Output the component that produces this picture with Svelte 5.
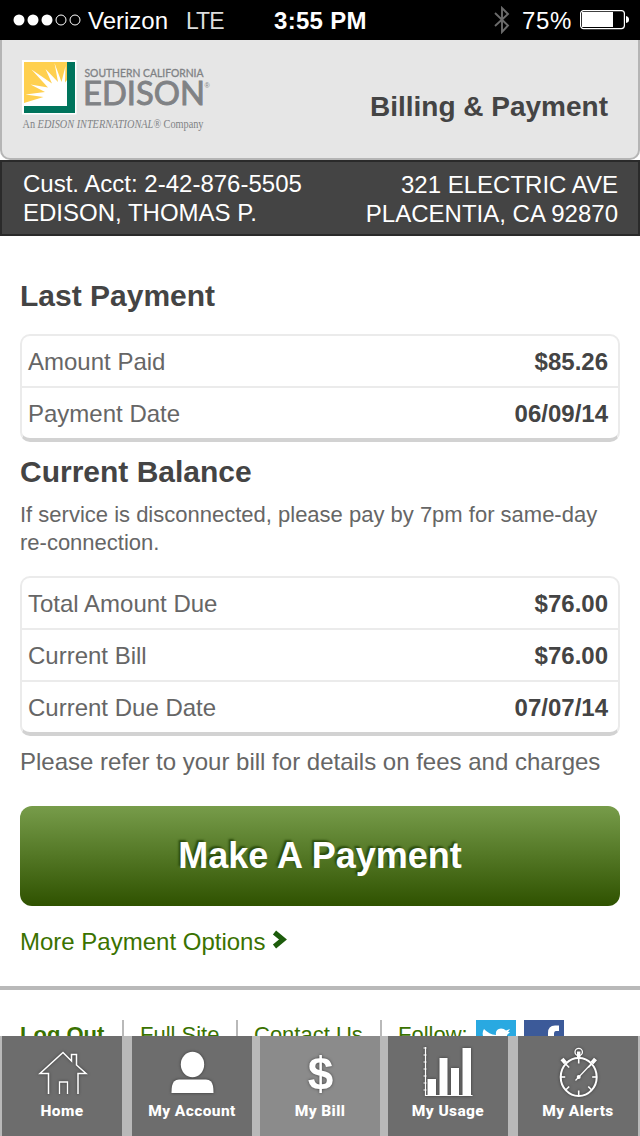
<script>
const account = {
  number: "2-42-876-5505",
  name: "EDISON, THOMAS P.",
  street: "321 ELECTRIC AVE",
  city: "PLACENTIA, CA 92870"
};

const lastPayment = [
  { label: "Amount Paid", value: "$85.26" },
  { label: "Payment Date", value: "06/09/14" }
];

const balance = [
  { label: "Total Amount Due", value: "$76.00" },
  { label: "Current Bill", value: "$76.00" },
  { label: "Current Due Date", value: "07/07/14" }
];

const tabs = [
  { id: "home", label: "Home" },
  { id: "account", label: "My Account" },
  { id: "bill", label: "My Bill" },
  { id: "usage", label: "My Usage" },
  { id: "alerts", label: "My Alerts" }
];

let active = $state("bill");

// minute marks on the stopwatch face
const ticks = [0, 45, 90, 135, 180, 225, 270, 315];
</script>

{#snippet rows(items)}
  <dl class="box">
    {#each items as item}
      <div class="row">
        <dt>{item.label}</dt>
        <dd>{item.value}</dd>
      </div>
    {/each}
  </dl>
{/snippet}

<div class="screen">
  <div class="status">
    <svg class="signal" width="70" height="14" viewBox="0 0 70 14">
      <g fill="#fff">
        <circle cx="7" cy="7" r="5.5" />
        <circle cx="21" cy="7" r="5.5" />
        <circle cx="35" cy="7" r="5.5" />
      </g>
      <g fill="none" stroke="#fff">
        <circle cx="49" cy="7" r="5" />
        <circle cx="63" cy="7" r="5" />
      </g>
    </svg>
    <span class="carrier">Verizon</span>
    <span class="network">LTE</span>
    <span class="time">3:55 PM</span>
    <svg class="bluetooth" width="16" height="28" viewBox="0 0 16 28">
      <path d="M1 7 L14 19.5 L8 26 V2 L14 8 L1 20" fill="none" stroke="#6b6b6b" stroke-width="1.9" />
    </svg>
    <span class="percent">75%</span>
    <svg class="battery" width="50" height="20" viewBox="0 0 50 20">
      <rect x="0.6" y="0.6" width="43.8" height="18" rx="3" fill="none" stroke="#fff" stroke-width="1.2" />
      <rect x="2" y="2" width="31" height="15" fill="#fff" />
      <path d="M46 6 Q49 6.5 49 9.6 Q49 12.7 46 13 Z" fill="#fff" />
    </svg>
  </div>

  <div class="header-wrap">
    <header>
      <svg class="logo" width="196" height="76" viewBox="0 0 196 76">
        <rect width="54.5" height="54.5" fill="#fff" />
        <rect x="2" y="2" width="51" height="51" fill="#00745c" />
        <path d="M2 2 H45 V46 H2 Z" fill="#ffd04f" />
        <path d="M45 46 V20 L43 22.5 L43.5 6 L39.5 22 L32.5 3 L36 22 L23.5 9 L30 23.5 L9.5 9.5 L26 27.5 L8.5 24.5 L23 32 L3.5 34.5 L21.5 37 L2 43 V46 Z" fill="#fff" />
        <path d="M2 44.5 H45 V46 H2 Z" fill="#fff" />
        <text class="region" x="62.5" y="16.5" textLength="119" lengthAdjust="spacingAndGlyphs">SOUTHERN CALIFORNIA</text>
        <text class="brand" x="61" y="45" textLength="122" lengthAdjust="spacingAndGlyphs">EDISON</text>
        <text class="reg" x="182.5" y="28">®</text>
        <text class="tagline" x="0.5" y="67.5" textLength="181" lengthAdjust="spacingAndGlyphs">An <tspan font-style="italic">EDISON INTERNATIONAL®</tspan> Company</text>
      </svg>
      <h1>Billing &amp; Payment</h1>
    </header>
  </div>

  <section class="customer">
    <p>Cust. Acct: {account.number}<br />{account.name}</p>
    <p class="address">{account.street}<br />{account.city}</p>
  </section>

  <main>
    <div class="content">
      <h2>Last Payment</h2>
      {@render rows(lastPayment)}

      <h2 class="second">Current Balance</h2>
      <p class="notice">If service is disconnected, please pay by 7pm for same-day re-connection.</p>
      {@render rows(balance)}

      <p class="refer">Please refer to your bill for details on fees and charges</p>
      <button class="pay">Make A Payment</button>
      <a class="more" href="#options">
        More Payment Options
        <svg width="16" height="20" viewBox="0 0 16 20">
          <path d="M2.5 2.5 L11 9.5 L2.5 16.5" fill="none" stroke="#1d5c0c" stroke-width="5" />
        </svg>
      </a>
    </div>

    <footer>
      <a class="logout" href="#logout">Log Out</a>
      <a class="full" href="#full">Full Site</a>
      <a class="contact" href="#contact">Contact Us</a>
      <span class="follow">Follow:</span>
      <svg class="social" width="40" height="40" viewBox="0 0 40 40">
        <rect width="40" height="40" fill="#29a9e1" />
        <path d="M8 9 Q13 14.5 20 15 Q19 9 25 8.5 Q28 8.5 30 10.5 L34 9 L32 12 L34 12 L31 15 Q31 31 16 32 Q11 32 7 29 Q13 29 16 26 Q11 26 10 22 Q7 20 7 16 Q6 12 8 9 Z" fill="#fff" />
      </svg>
      <svg class="social" width="40" height="40" viewBox="0 0 40 40">
        <rect width="40" height="40" fill="#3c5a99" />
        <path d="M24 40 V24 H19 V18 H24 V13 Q24 5.5 31 5.5 H35 V11 H32 Q30 11 30 14 V18 H35 L34 24 H30 V40 Z" fill="#fff" />
      </svg>
    </footer>
  </main>

  <nav>
    {#each tabs as tab}
      <button class="tab" class:active={active === tab.id} onclick={() => (active = tab.id)}>
        <svg class="icon" width="60" height="54" viewBox="0 0 60 54">
          {#if tab.id === "home"}
            <path d="M16.5 48 V27.5 H8 L31 6.5 L39.5 15 V8.5 H44.5 V19 L54 27.5 H46 V48" fill="none" stroke="#fff" stroke-width="1.5" />
            <path d="M27.5 48 V36 H35.5 V48" fill="none" stroke="#fff" stroke-width="1.3" />
          {:else if tab.id === "account"}
            <ellipse cx="30.5" cy="18.5" rx="11.7" ry="12.7" fill="#fff" />
            <path d="M9.5 47 Q9.5 38 12 35.500 Q14 33.5 17 33.5 H44 Q47 33.5 49 35.5 Q51.5 38 51.5 47 Z" fill="#fff" />
          {:else if tab.id === "bill"}
            <text class="dollar" x="30.5" y="44" text-anchor="middle">$</text>
          {:else if tab.id === "usage"}
            <path d="M7.5 1 V49.5 H54.500" fill="none" stroke="#fff" stroke-width="1.2" />
            <path d="M7 1.5 V49" fill="none" stroke="#fff" stroke-width="3" stroke-dasharray="1 6" />
            <path d="M9.5 33 H18 V49 H9.5 Z M21.5 12 H29.5 V49 H21.5 Z M33 22 H41 V49 H33 Z M44.5 2 H53 V49 H44.5 Z" fill="#fff" />
          {:else}
            <g fill="none" stroke="#fff">
              <ellipse cx="30.7" cy="31" rx="18" ry="19" stroke-width="2" />
              <circle cx="30.7" cy="6" r="3.7" stroke-width="1.3" />
              <path d="M30.7 5.5 V12" stroke-width="3.5" />
              <path d="M14 13 L17.5 17 M47.5 13 L44 17" stroke-width="4" />
              <path d="M27.5 34.5 L44 17" stroke-width="1.2" />
              {#each ticks as angle}
                <path d="M30.7 13 V17.5" stroke-width="1.6" transform="rotate({angle} 30.7 31)" />
              {/each}
            </g>
            <circle cx="30.7" cy="31" r="2" fill="#fff" />
          {/if}
        </svg>
        <span>{tab.label}</span>
      </button>
    {/each}
  </nav>
</div>

<style>
:global(body) {
  margin: 0;
  background: #fff;
}

.screen {
  display: flex;
  flex-direction: column;
  width: 640px;
  height: 1136px;
  overflow: hidden;
  background: #fff;
  color: #666;
  font-family: "Liberation Sans", Helvetica, Arial, sans-serif;
  font-size: 24px;
}

h1, h2, p, dl, dd {
  margin: 0;
}

a {
  color: #3a7200;
  text-decoration: none;
}

button {
  border: 0;
  padding: 0;
  font-family: inherit;
  color: #fff;
}

/* status bar */

.status {
  display: flex;
  align-items: center;
  flex: 0 0 40px;
  padding-left: 11.5px;
  background: #000;
  color: #fff;
  line-height: 40px;
}

.status span {
  padding-top: 2px;
  line-height: 38px;
}

.carrier {
  width: 81px;
  margin-left: 6.5px;
}

.network {
  width: 36px;
  margin-left: 17px;
  font-size: 23px;
  letter-spacing: -1px;
  color: #ddd;
}

.time {
  width: 94px;
  margin-left: 52px;
  font-weight: bold;
  letter-spacing: 0.3px;
}

.bluetooth {
  margin-left: 126px;
}

.percent {
  width: 51px;
  margin-left: 12px;
  letter-spacing: 0.7px;
}

.battery {
  margin-left: 7px;
}

/* header */

.header-wrap {
  flex: 0 0 120px;
  background: #fff;
}

header {
  display: flex;
  justify-content: space-between;
  box-sizing: border-box;
  height: 120px;
  padding: 20px 30px 0 20px;
  border: 2px solid #b5b5b5;
  border-top: 0;
  border-radius: 0 0 10px 10px;
  background: #e6e6e6;
}

h1 {
  padding-top: 31px;
  font-size: 28px;
  line-height: 32px;
  color: #444;
}

.logo text {
  fill: #808285;
}

.logo .region {
  font-family: Lato, sans-serif;
  font-size: 11px;
  stroke: #808285;
  stroke-width: 0.3px;
}

.logo .brand {
  font-family: Lato, sans-serif;
  font-size: 32px;
  stroke: #808285;
  stroke-width: 0.9px;
}

.logo .reg {
  font-size: 7px;
}

.logo .tagline {
  font-family: "Liberation Serif", serif;
  font-size: 11.5px;
}

/* customer bar */

.customer {
  display: flex;
  justify-content: space-between;
  box-sizing: border-box;
  flex: 0 0 76px;
  padding: 7px 20px 0 21px;
  border: 2px solid #2a2a2a;
  background: #444;
  color: #fff;
  line-height: 29px;
}

.address {
  padding-top: 1px;
  text-align: right;
}

/* content */

main {
  flex: 1;
  min-height: 0;
  overflow: hidden;
}

.content {
  display: flex;
  flex-direction: column;
  padding: 42px 20px 30px;
}

h2 {
  margin-bottom: 20px;
  font-size: 30px;
  line-height: 36px;
  color: #444;
}

h2.second {
  margin: 12px 0 11px;
}

.box {
  border: 2px solid #ebebeb;
  border-bottom: 4px solid #d2d2d2;
  border-radius: 10px;
}

.row {
  display: flex;
  justify-content: space-between;
  padding: 2px 10px 0 6px;
  line-height: 48px;
}

.row + .row {
  border-top: 2px solid #ebebeb;
}

dd {
  font-weight: bold;
  color: #444;
}

.notice {
  margin-bottom: 19px;
  font-size: 22px;
  line-height: 28px;
}

.refer {
  margin-top: 12px;
  line-height: 28px;
}

.pay {
  height: 100px;
  margin: 30px 0 22px;
  border-radius: 12px;
  background: linear-gradient(#779c4a, #2f5200);
  font-size: 36px;
  font-weight: bold;
  text-shadow: -2px -2px 2px rgba(30, 60, 0, 0.75);
}

.more {
  display: flex;
  align-items: center;
  gap: 7px;
  line-height: 28px;
}

.more svg {
  margin-top: -5px;
}

/* footer */

footer {
  display: flex;
  padding: 30px 20px 0;
  border-top: 4px solid #b9b9b9;
  font-size: 22px;
  line-height: 30px;
}

footer a,
footer .follow {
  box-sizing: border-box;
  height: 40px;
  white-space: nowrap;
}

footer a {
  border-right: 2px solid #b9b9b9;
}

.logout {
  width: 104px;
  font-weight: bold;
}

.full {
  width: 114px;
  padding-left: 16px;
}

.contact {
  width: 144px;
  padding-left: 16px;
}

.follow {
  width: 94px;
  padding-left: 16px;
  color: #3a7200;
}

.social {
  margin-right: 8px;
}

/* tab bar */

nav {
  display: grid;
  grid-template-columns: 130px 128px 128px 130px 120px;
  flex: 0 0 100px;
  padding: 0 2px;
  background: #b9b9b9;
}

.tab {
  display: flex;
  flex-direction: column;
  align-items: center;
  width: 120px;
  padding-top: 10px;
  background: #6d6d6d;
  font-family: Roboto, sans-serif;
  font-size: 15.5px;
  font-weight: 800;
  line-height: 22px;
  letter-spacing: 0.4px;
}

.tab.active {
  background: #8b8b8b;
}

.tab .icon {
  flex: none;
  filter: drop-shadow(0 0 1.5px rgba(0, 0, 0, 0.5));
}

.tab .dollar {
  font-family: "Liberation Sans", Helvetica, sans-serif;
  font-size: 46px;
  letter-spacing: 0;
  fill: #fff;
}
</style>
